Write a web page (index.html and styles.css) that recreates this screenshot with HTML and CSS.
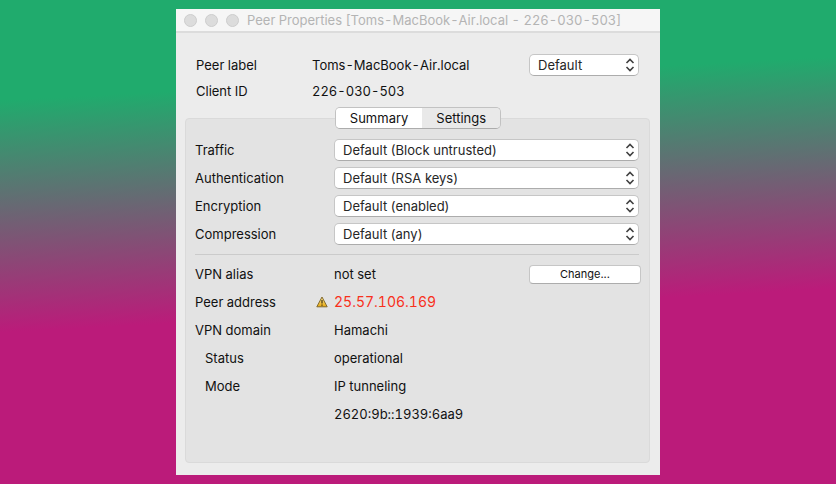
FILE: index.html
```html
<!DOCTYPE html>
<html lang="en">
  <head>
    <meta charset="utf-8" />
    <title>Peer Properties</title>
    <link rel="stylesheet" href="styles.css" />
  </head>
  <body>
    <main class="window">
      <header class="titlebar">
        <span class="dot"></span>
        <span class="dot"></span>
        <span class="dot"></span>
        <h1>Peer Properties [Toms-MacBook-Air.local - 226-030-503]</h1>
      </header>

      <section class="peer">
        <label for="peerLabel">Peer label</label>
        <span>Toms-MacBook-Air.local</span>
        <div class="select">
          <select id="peerLabel">
            <option>Default</option>
          </select>
          <svg class="arrows" viewBox="0 0 10 14">
            <path d="M1.5 5 5 1.5 8.5 5M1.5 9 5 12.5 8.5 9" />
          </svg>
        </div>
        <span>Client ID</span>
        <span>226-030-503</span>
      </section>

      <div class="tabs" role="tablist">
        <button type="button" class="tab active" role="tab" aria-selected="true">Summary</button>
        <button type="button" class="tab" role="tab" aria-selected="false">Settings</button>
      </div>

      <section class="panel">
        <!-- Connection settings -->
        <div class="row">
          <label for="traffic">Traffic</label>
          <div class="select">
            <select id="traffic">
              <option>Default (Block untrusted)</option>
            </select>
            <svg class="arrows" viewBox="0 0 10 14">
              <path d="M1.5 5 5 1.5 8.5 5M1.5 9 5 12.5 8.5 9" />
            </svg>
          </div>
        </div>
        <div class="row">
          <label for="authentication">Authentication</label>
          <div class="select">
            <select id="authentication">
              <option>Default (RSA keys)</option>
            </select>
            <svg class="arrows" viewBox="0 0 10 14">
              <path d="M1.5 5 5 1.5 8.5 5M1.5 9 5 12.5 8.5 9" />
            </svg>
          </div>
        </div>
        <div class="row">
          <label for="encryption">Encryption</label>
          <div class="select">
            <select id="encryption">
              <option>Default (enabled)</option>
            </select>
            <svg class="arrows" viewBox="0 0 10 14">
              <path d="M1.5 5 5 1.5 8.5 5M1.5 9 5 12.5 8.5 9" />
            </svg>
          </div>
        </div>
        <div class="row">
          <label for="compression">Compression</label>
          <div class="select">
            <select id="compression">
              <option>Default (any)</option>
            </select>
            <svg class="arrows" viewBox="0 0 10 14">
              <path d="M1.5 5 5 1.5 8.5 5M1.5 9 5 12.5 8.5 9" />
            </svg>
          </div>
        </div>

        <hr />

        <!-- Peer status -->
        <div class="row">
          <span>VPN alias</span>
          <div class="value alias">
            <span>not set</span>
            <button type="button" class="change">Change...</button>
          </div>
        </div>
        <div class="row">
          <span>Peer address</span>
          <svg class="warning" viewBox="0 0 12 12">
            <defs>
              <linearGradient id="amber" x1="0" y1="0" x2="0" y2="1">
                <stop offset="0" stop-color="#fbe9a0" />
                <stop offset="1" stop-color="#e9a80c" />
              </linearGradient>
            </defs>
            <path d="M6 1 11.2 10.8H.8Z" fill="url(#amber)" stroke="#80682c" stroke-linejoin="round" />
            <path d="M6 4V7.6M6 8.6V9.8" stroke="#3c3010" stroke-width="1.2" />
          </svg>
          <span class="value ip address">25.57.106.169</span>
        </div>
        <div class="row">
          <span>VPN domain</span>
          <span class="value">Hamachi</span>
        </div>
        <div class="row">
          <span class="indent">Status</span>
          <span class="value">operational</span>
        </div>
        <div class="row">
          <span class="indent">Mode</span>
          <span class="value">IP tunneling</span>
        </div>
        <div class="row">
          <span class="value">2620:9b::1939:6aa9</span>
        </div>
      </section>
    </main>
  </body>
</html>
```
FILE: styles.css
```css
* {
  box-sizing: border-box;
}

body {
  display: flex;
  justify-content: center;
  min-height: 100vh;
  margin: 0;
  padding: 9px 16px;
  font-family: Inter, "Liberation Sans", sans-serif;
  font-size: 13px;
  font-variant-numeric: tabular-nums;
  line-height: 20px;
  color: #111;
  background: linear-gradient(177deg, #20ab6d 19%, #bb1b7a 63%);
}

button,
select {
  font-family: inherit;
  font-size: inherit;
  color: inherit;
}

.window {
  display: flex;
  flex-direction: column;
  width: 100%;
  max-width: 484px;
  background: #ececec;
}

.titlebar {
  display: flex;
  align-items: center;
  gap: 8px;
  height: 24px;
  padding: 0 8px;
  background: #f6f6f6;
  border-bottom: 2px solid #dcdcdc;
}

.titlebar h1 {
  margin: 0;
  font-size: 13px;
  font-weight: 400;
  color: #b4b4b4;
  white-space: nowrap;
}

.dot {
  flex: none;
  width: 13px;
  height: 13px;
  border: 1px solid #cdcdcd;
  border-radius: 50%;
  background: #dcdcdc;
}

.peer {
  display: grid;
  grid-template-columns: 116px 1fr 110px;
  align-items: center;
  row-gap: 5px;
  padding: 21px 21px 0 20px;
}

.select {
  position: relative;
}

.select select {
  display: block;
  width: 100%;
  height: 22px;
  padding: 0 24px 0 8px;
  border: 1px solid #c6c6c6;
  border-bottom-color: #acacac;
  border-radius: 5px;
  background: #fff;
  color: #262626;
  appearance: none;
}

.arrows {
  position: absolute;
  top: 4px;
  right: 4px;
  width: 10px;
  height: 14px;
  fill: none;
  stroke: #404040;
  stroke-width: 1.6;
  pointer-events: none;
}

.tabs {
  z-index: 1;
  display: flex;
  align-self: center;
  margin: 6px 0 -11px;
  border: 1px solid #c2c2c2;
  border-bottom-color: #acacac;
  border-radius: 5px;
  overflow: hidden;
}

.tab {
  height: 20px;
  padding: 0 14px;
  border: none;
  background: #e9e9e9;
}

.tab.active {
  background: #fff;
}

.panel {
  display: flex;
  flex-direction: column;
  flex: 1;
  gap: 6px;
  margin: 0 10px 12px 9px;
  padding: 20px 10px 20px 9px;
  border: 1px solid #dadada;
  border-radius: 4px;
  background: #e3e3e3;
}

.row {
  display: grid;
  grid-template-columns: 121px 18px 1fr;
  align-items: center;
  min-height: 22px;
}

.row .select,
.value {
  grid-column: 3;
}

.indent {
  padding-left: 10px;
}

hr {
  width: 100%;
  margin: 3px 0 2px;
  border: none;
  border-top: 1px solid #cbcbcb;
}

.alias {
  display: flex;
  align-items: center;
  justify-content: space-between;
}

.change {
  width: 112px;
  height: 19px;
  margin-right: -2px;
  padding: 0;
  border: 1px solid #c6c6c6;
  border-bottom-color: #acacac;
  border-radius: 4px;
  background: #fff;
  font-size: 11px;
}

.warning {
  width: 12px;
  height: 12px;
}

.ip {
  font-size: 14px;
}

.address {
  color: #f8301c;
}
```
